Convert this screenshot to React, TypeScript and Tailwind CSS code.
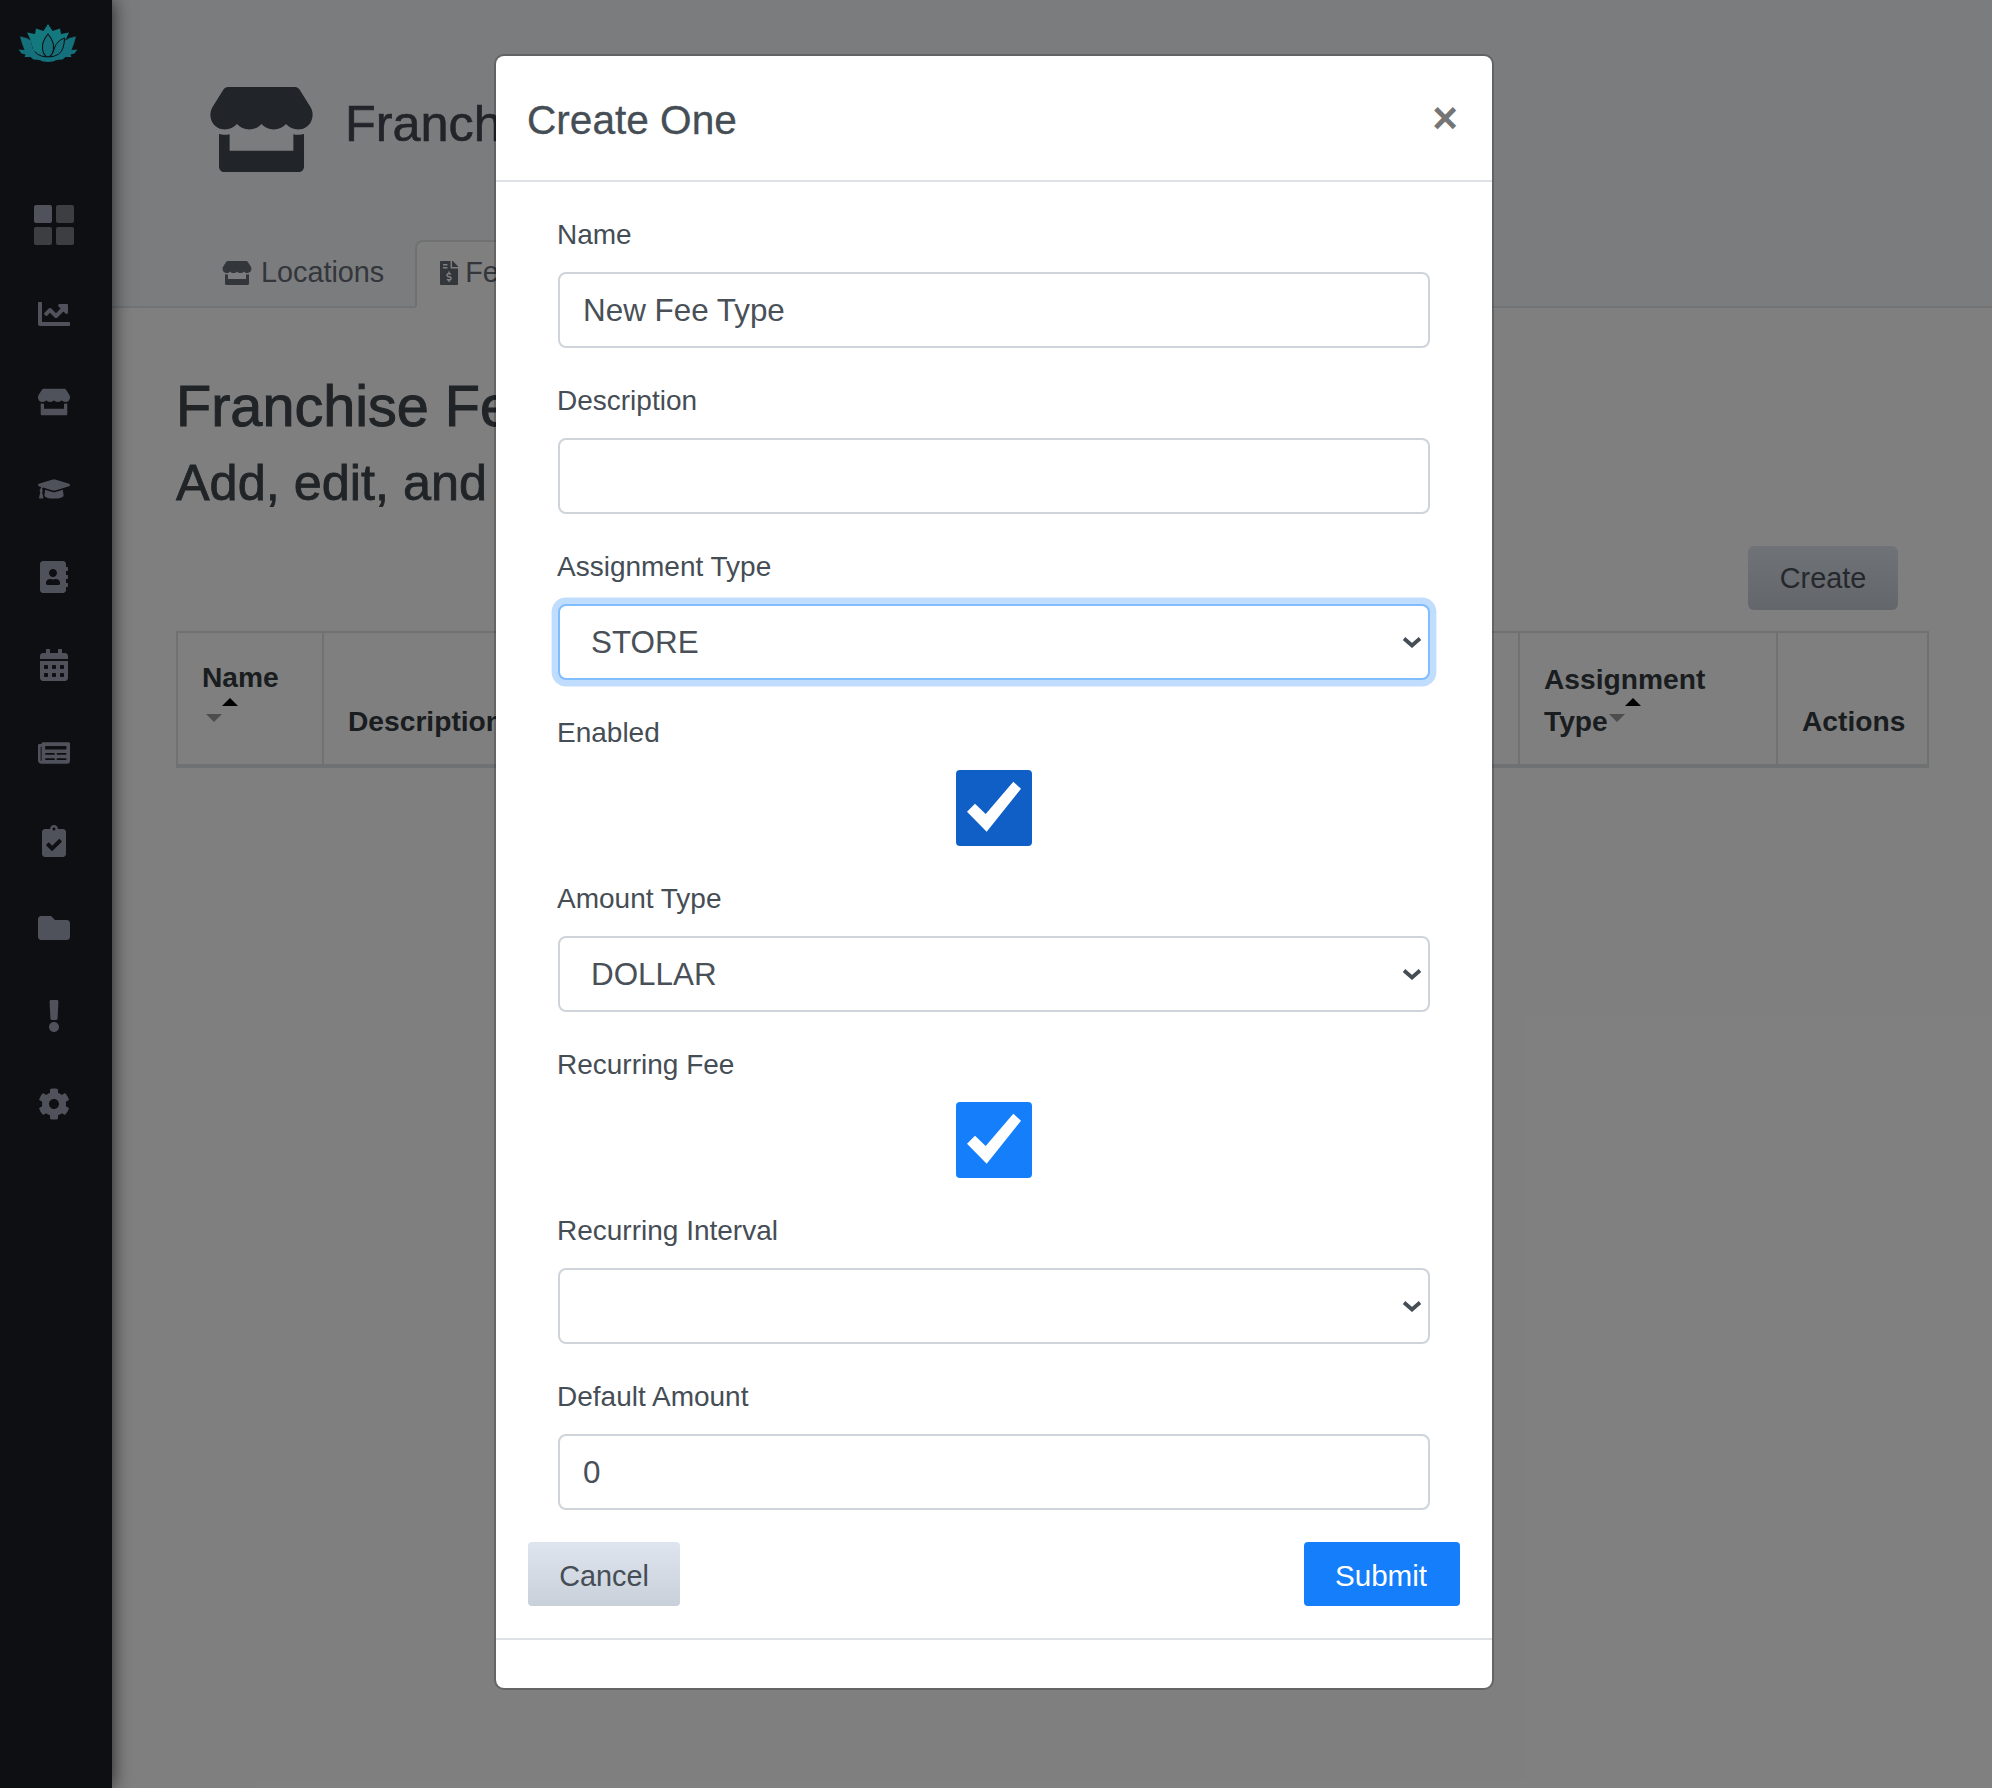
import React from "react";
import {
  FaStore, FaChartLine, FaGraduationCap, FaAddressBook, FaCalendarAlt, FaNewspaper,
  FaClipboardCheck, FaFolder, FaExclamation, FaCog, FaFileInvoiceDollar,
} from "react-icons/fa";

function Lotus() {
  const half = (
    <>
      <path d="M29.5 0 L34 7 L41.5 4.5 L42.5 10 L50.5 8.5 L47 16 L44 27 L29.5 30 Z" fill="#28f0ff" />
      <path d="M1 12 Q9 13 14 17 L18 27 L26 34 Q12 34 6 27 Q3 20 1 12 Z" fill="#28e0f5" stroke="#1c1e24" strokeWidth="0.7" />
      <path d="M0 25.5 L6 26 Q14 31 29.5 33 L29.5 38 Q24 38 21 36 L15 35.5 L12 33 L6 33 L7 30.5 L3 29.5 Z" fill="#28e0f5" />
      <path d="M13 14 Q21 17 23 24 Q24 29 28 33 Q17 32 14.5 24 Q13 19 13 14 Z" fill="#28e0f5" stroke="#1c1e24" strokeWidth="1" />
    </>
  );
  return (
    <svg viewBox="0 0 59 38" className="w-[60px] h-[38px]">
      {half}
      <g transform="translate(59 0) scale(-1 1)">{half}</g>
      <path d="M29.5 10 Q36 18 35 25 Q34 32 29.5 33 Q25 32 24 25 Q23 18 29.5 10 Z" fill="#28e0f5" stroke="#1c1e24" strokeWidth="1.1" />
    </svg>
  );
}

function Grid() {
  return (
    <svg viewBox="0 0 40 40" className="w-[40px] h-[40px]">
      <rect x="0" y="0" width="18" height="18" rx="2" fill="#9ea4b6" />
      <rect x="22" y="0" width="18" height="18" rx="2" fill="#7b7c84" />
      <rect x="0" y="22" width="18" height="18" rx="2" fill="#7b7c84" />
      <rect x="22" y="22" width="18" height="18" rx="2" fill="#7b7c84" />
    </svg>
  );
}

function Check() {
  return (
    <svg viewBox="0 0 76 76" className="w-[76px] h-[76px]">
      <polygon points="57.3,11.7 65,18.7 30.7,61.7 11,41.7 19,33.7 29.7,44" fill="#fff" />
    </svg>
  );
}

function Chevron() {
  return (
    <svg viewBox="0 0 18 12" className="absolute right-[9px] top-1/2 -translate-y-1/2 w-[18px] h-[12px] pointer-events-none">
      <path d="M1 2.5 L9 9.5 L17 2.5" fill="none" stroke="#454d55" strokeWidth="3.8" />
    </svg>
  );
}

function Label({ children }: { children: React.ReactNode }) {
  return <div className="h-[44px] mb-[16px] -ml-px text-[28px] leading-[45px] text-[#454d55]">{children}</div>;
}

function TextField({ label, value }: { label: string; value: string }) {
  return (
    <div className="mb-[30px]">
      <Label>{label}</Label>
      <input
        readOnly
        value={value}
        className="block w-full h-[76px] pl-[23px] pr-[24px] pt-[2px] bg-white border-2 border-[#ced4da] rounded-[8px] text-[31.4px] text-[#495057] outline-none"
      />
    </div>
  );
}

function SelectField({ label, value, focus }: { label: string; value: string; focus?: boolean }) {
  return (
    <div className="mb-[30px]">
      <Label>{label}</Label>
      <div className="relative">
        <select
          value={value}
          onChange={() => {}}
          className={
            focus
              ? "block w-full h-[76px] pl-[31px] pr-[40px] pt-[2px] appearance-none bg-white border-2 border-[#80bdff] shadow-[0_0_0_6.4px_#c1ddfe] rounded-[8px] text-[31.4px] text-[#495057] outline-none"
              : "block w-full h-[76px] pl-[31px] pr-[40px] pt-[2px] appearance-none bg-white border-2 border-[#ced4da] rounded-[8px] text-[31.4px] text-[#495057] outline-none"
          }
        >
          <option value={value}>{value}</option>
        </select>
        <Chevron />
      </div>
    </div>
  );
}

function CheckField({ label, dark }: { label: string; dark?: boolean }) {
  return (
    <div className="mb-[30px]">
      <Label>{label}</Label>
      <div className="flex justify-center">
        <div className={dark ? "w-[76px] h-[76px] rounded-[4px] bg-[#0f5fc7]" : "w-[76px] h-[76px] rounded-[4px] bg-[#147efb]"}>
          <Check />
        </div>
      </div>
    </div>
  );
}

function Carets({ up, down }: { up: string; down: string }) {
  return (
    <>
      <span className={`absolute top-[65px] ${up} w-0 h-0 border-x-[8px] border-x-transparent border-b-[8px] border-b-black`} />
      <span className={`absolute top-[81px] ${down} w-0 h-0 border-x-[8px] border-x-transparent border-t-[8px] border-t-[#9a9a9a]`} />
    </>
  );
}

const sideIcons = [FaChartLine, FaStore, FaGraduationCap, FaAddressBook, FaCalendarAlt, FaNewspaper, FaClipboardCheck, FaFolder, FaExclamation, FaCog];

const th = "relative align-bottom border-2 border-[#dee2e6] border-b-[4px] px-[24px] pb-[22px] pt-[23px] text-left text-[28.2px] leading-[42px] font-bold text-[#343a40]";

export default function App() {
  return (
    <div className="relative flex w-full h-[1788px] overflow-hidden bg-white font-['Liberation_Sans',Arial,sans-serif]">
      <aside className="relative z-10 w-[112px] shrink-0 bg-[#1c1e24] shadow-[0_0_18px_rgba(0,0,0,0.75)]">
        <div className="h-[181px] pt-[24px] pl-[18px]">
          <Lotus />
        </div>
        <div className="w-[108px] flex flex-col items-center">
          <div className="h-[89px] flex items-start justify-center pt-[24px]"><Grid /></div>
          {sideIcons.map((Icon, i) => (
            <div key={i} className="h-[87.8px] flex items-center justify-center text-[#9ea4b6]">
              <Icon size={32} />
            </div>
          ))}
        </div>
      </aside>

      <main className="flex-1 min-w-0">
        <header className="h-[308px] bg-[#f6f8fc] border-b-2 border-[#e4e6ea] flex flex-col justify-between">
          <div className="flex items-center pl-[98px] pt-[87px] gap-[32px]">
            <FaStore className="w-[103px] h-[85px] text-[#424852]" />
            <h1 className="-mt-[12px] text-[50.4px] leading-[72px] text-[#424852] [-webkit-text-stroke:0.6px_#424852]">Franchise</h1>
          </div>
          <nav className="flex pl-[86px] -mb-[2px]">
            <div className="h-[68px] pl-[24px] pr-[31px] pb-[2px] flex items-center gap-[9px] text-[28.8px] text-[#666c76]">
              <FaStore className="w-[30px] h-[24px]" />
              <span>Locations</span>
            </div>
            <div className="h-[68px] pl-[23px] pr-[24px] pb-[2px] flex items-center gap-[7px] text-[28.8px] text-[#666c76] bg-white border-2 border-[#dee2e6] border-b-white rounded-t-[8px]">
              <FaFileInvoiceDollar className="w-[18px] h-[24px]" />
              <span>Fees</span>
            </div>
          </nav>
        </header>

        <section className="pl-[64px] pr-[62px] pt-[64px]">
          <h2 className="text-[57.6px] leading-[68px] text-[#42484f] [-webkit-text-stroke:1px_#42484f]">Franchise Fees</h2>
          <h3 className="mt-[14px] text-[50.4px] leading-[58px] text-[#42484f] [-webkit-text-stroke:0.8px_#42484f]">Add, edit, and remove</h3>
          <div className="flex justify-end pr-[32px] mt-[34px]">
            <button className="w-[150px] h-[64px] pt-[2px] rounded-[6px] bg-gradient-to-b from-[#dfe5ee] to-[#c6ced8] text-[28.8px] text-[#4a5059]">Create</button>
          </div>
          <table className="mt-[21px] w-[1751px] table-fixed border-collapse">
            <colgroup>
              <col className="w-[146px]" />
              <col className="w-[300px]" />
              <col className="w-[180px]" />
              <col className="w-[180px]" />
              <col className="w-[180px]" />
              <col className="w-[180px]" />
              <col className="w-[176px]" />
              <col className="w-[258px]" />
              <col className="w-[151px]" />
            </colgroup>
            <thead>
              <tr className="h-[134px]">
                <th className={th + " !align-top"}>Name<Carets up="left-[44px]" down="left-[28px]" /></th>
                <th className={th}>Description</th>
                <th className={th}>Enabled</th>
                <th className={th}>Amount Type</th>
                <th className={th}>Recurring Fee</th>
                <th className={th}>Recurring Interval</th>
                <th className={th}>Default Amount</th>
                <th className={th}>Assignment<br />Type<Carets up="left-[105px]" down="left-[89px]" /></th>
                <th className={th}>Actions</th>
              </tr>
            </thead>
          </table>
        </section>
      </main>

      <div className="absolute inset-0 z-20 bg-black/50">
        <div className="absolute left-[494px] top-[54px] w-[1000px] bg-white bg-clip-padding border-2 border-black/20 rounded-[10px] text-[#454d55]">
          <div className="h-[126px] pl-[31px] pr-[30px] flex items-start justify-between border-b-2 border-[#dee2e6]">
            <div className="mt-[34px] text-[40.6px] leading-[60px] text-[#454d55] [-webkit-text-stroke:0.3px_#454d55]">Create One</div>
            <div className="mt-[32px] mr-[4px] text-[44px] leading-[60px] font-bold text-[#757575]">×</div>
          </div>
          <div className="pt-[30px] px-[62px]">
            <TextField label="Name" value="New Fee Type" />
            <TextField label="Description" value="" />
            <SelectField label="Assignment Type" value="STORE" focus />
            <CheckField label="Enabled" dark />
            <SelectField label="Amount Type" value="DOLLAR" />
            <CheckField label="Recurring Fee" />
            <SelectField label="Recurring Interval" value="" />
            <TextField label="Default Amount" value="0" />
          </div>
          <div className="flex justify-between px-[32px] pb-[32px] pt-[2px]">
            <button className="w-[152px] h-[64px] pt-[5px] rounded-[4px] bg-gradient-to-b from-[#dfe5ee] to-[#c8d0da] text-[28.8px] text-[#454d55]">Cancel</button>
            <button className="w-[156px] h-[64px] pt-[5px] pr-[2px] rounded-[4px] bg-[#147efb] text-[29.6px] text-white">Submit</button>
          </div>
          <div className="h-[50px] border-t-2 border-[#dee2e6]" />
        </div>
      </div>
    </div>
  );
}
